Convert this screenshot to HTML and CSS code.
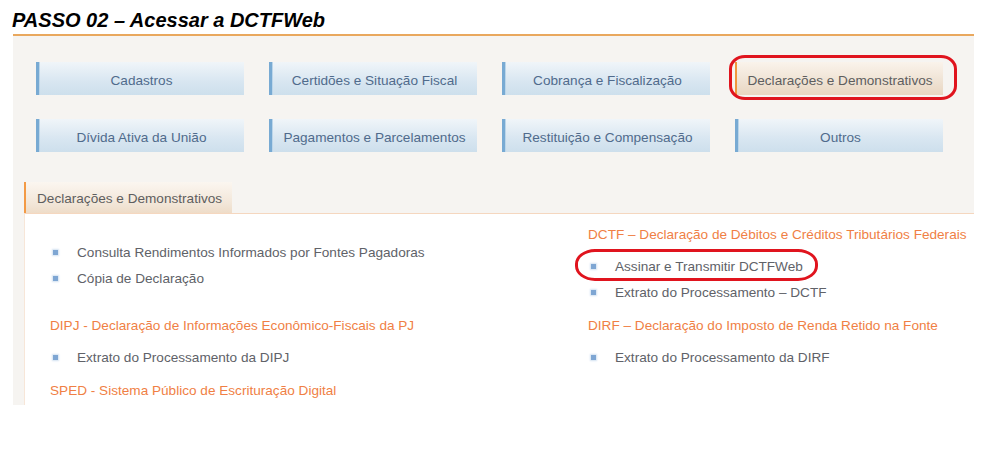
FILE: index.html
```html
<!DOCTYPE html>
<html lang="pt-BR">

<head>
    <meta charset="UTF-8">
    <meta name="viewport" content="width=device-width, initial-scale=1.0">
    <title>PASSO 02 - Acessar a DCTFWeb</title>
    <link rel="stylesheet" href="styles.css">
</head>

<body>
    <h1 class="title">PASSO 02 – Acessar a DCTFWeb</h1>

    <div class="panel">
        <div class="menu">
            <a class="btn">Cadastros</a>
            <a class="btn">Certidões e Situação Fiscal</a>
            <a class="btn">Cobrança e Fiscalização</a>
            <a class="btn active">Declarações e Demonstrativos<span class="mark mark-btn"></span></a>
            <a class="btn">Dívida Ativa da União</a>
            <a class="btn">Pagamentos e Parcelamentos</a>
            <a class="btn">Restituição e Compensação</a>
            <a class="btn">Outros</a>
        </div>

        <div class="tabs">
            <span class="tab">Declarações e Demonstrativos</span>
        </div>

        <div class="content">
            <div class="col col-left">
                <ul class="list spaced">
                    <li>Consulta Rendimentos Informados por Fontes Pagadoras</li>
                    <li>Cópia de Declaração</li>
                </ul>
                <h3>DIPJ - Declaração de Informações Econômico-Fiscais da PJ</h3>
                <ul class="list">
                    <li>Extrato do Processamento da DIPJ</li>
                </ul>
                <h3>SPED - Sistema Público de Escrituração Digital</h3>
            </div>

            <div class="col col-right">
                <h3 class="first">DCTF – Declaração de Débitos e Créditos Tributários Federais</h3>
                <ul class="list">
                    <li>Assinar e Transmitir DCTFWeb<span class="mark mark-item"></span></li>
                    <li>Extrato do Processamento – DCTF</li>
                </ul>
                <h3>DIRF – Declaração do Imposto de Renda Retido na Fonte</h3>
                <ul class="list">
                    <li>Extrato do Processamento da DIRF</li>
                </ul>
            </div>
        </div>
    </div>
</body>

</html>
```

FILE: styles.css
```css
* {
    margin: 0;
    padding: 0;
    box-sizing: border-box;
}

body {
    background-color: #fff;
    font-family: "Liberation Sans", Arial, sans-serif;
    color: #5a5a5a;
}

.title {
    font-size: 20px;
    font-weight: bold;
    font-style: italic;
    color: #000;
    line-height: 24px;
    padding: 8px 0 2px 12px;
}

.panel {
    margin: 0 22px 0 13px;
    border-top: 2px solid #e9a85e;
    background-color: #f6f4f1;
    padding-left: 11px;
}

/* botões do menu */
.menu {
    display: grid;
    grid-template-columns: repeat(4, 208px);
    column-gap: 25px;
    row-gap: 24px;
    padding: 26px 0 0 12px;
}

.btn {
    position: relative;
    display: flex;
    align-items: center;
    justify-content: center;
    height: 33px;
    padding-top: 3px;
    font-size: 13.6px;
    color: #506b8c;
    background: linear-gradient(#f0f5f9, #d8e6f1 60%, #cddfec);
    border-left: 3px solid #78aad3;
    box-shadow: inset 1px 0 0 #bcd6ea;
}

.btn.active {
    color: #5e5e5e;
    background: linear-gradient(#faf3eb, #efe2d3 60%, #e9d6c1);
    border-left: 2px solid #f0973d;
    box-shadow: none;
}

.mark {
    position: absolute;
    border: 3px solid #e0141e;
    pointer-events: none;
}

.mark-btn {
    left: -8px;
    top: -7px;
    right: -14px;
    bottom: -5px;
    border-radius: 16px / 14px;
}

.mark-item {
    left: -13px;
    top: -5px;
    width: 243px;
    height: 32px;
    border-radius: 20px / 15px;
}

/* aba */
.tabs {
    margin-top: 30px;
    display: flex;
}

.tab {
    width: 208px;
    height: 31px;
    display: flex;
    align-items: center;
    padding: 2px 0 0 11px;
    font-size: 13.6px;
    color: #5e5e5e;
    background: linear-gradient(#fbf6f0, #f2e6d8 70%, #eedcc8);
    border-left: 2px solid #f39a45;
}

.content {
    display: flex;
    background-color: #fff;
    border-top: 1px solid #f5d7bf;
    border-left: 1px solid #f7e6d8;
    height: 192px;
}

.col {
    display: flex;
    flex-direction: column;
}

.col-left {
    width: 563px;
    padding: 26px 0 0 25px;
}

.col-right {
    padding-top: 8px;
}

.col h3 {
    font-size: 13.6px;
    font-weight: normal;
    color: #f07f45;
    line-height: 26px;
    margin-top: 7px;
}

.col h3.first {
    margin-top: 0;
}

.list {
    list-style: none;
}

.col h3 + .list {
    margin-top: 6px;
}

.list.spaced {
    margin-bottom: 14px;
}

.list li {
    position: relative;
    font-size: 13.6px;
    line-height: 26px;
    color: #606268;
    padding-left: 27px;
}

.list li::before {
    content: "";
    position: absolute;
    left: 3px;
    top: 10px;
    width: 5px;
    height: 5px;
    background-color: #7ea6d3;
    box-shadow: 0 0 2px 1px #d2e1f1;
}
```
